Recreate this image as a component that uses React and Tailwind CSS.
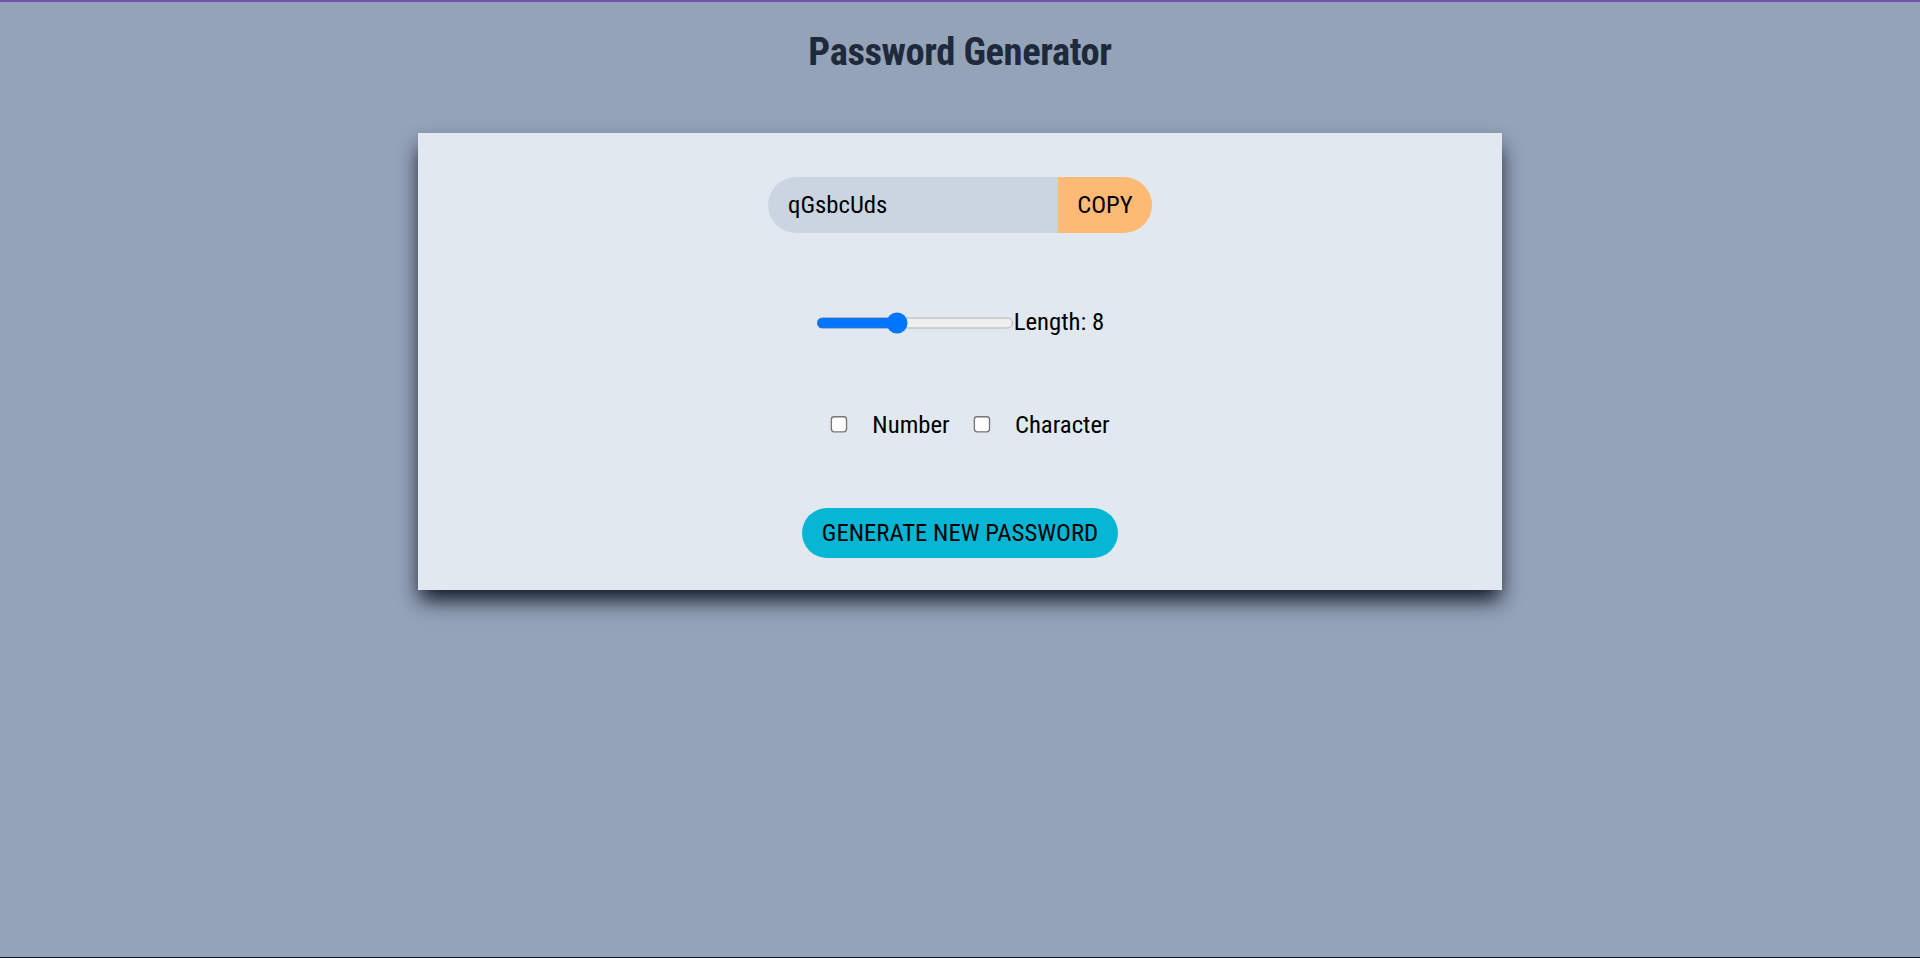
import React, { useState } from 'react';

const App = () => {
  const [length, setLength] = useState(8);
  const [numberAllowed, setNumberAllowed] = useState(false);
  const [charAllowed, setCharAllowed] = useState(false);
  const [password] = useState('qGsbcUds');

  return (
    <div className="w-full h-[958px] bg-[#94a3b8] border-t-2 border-[#7350b0] border-b border-b-[#14141f] font-['Roboto',sans-serif] [font-stretch:80%] overflow-hidden">
      {/* title */}
      <h1 className="text-center text-[38.5px] leading-none font-bold text-[#1e293b] pt-[31px] tracking-[-0.4px]">
        Password Generator
      </h1>

      {/* card */}
      <div className="w-[1084px] mx-auto mt-[61px] bg-[#e2e8f0] shadow-[0_12px_20px_-2px_rgba(10,12,30,0.95)] pt-[44px] pb-[32px] flex flex-col items-center text-black text-[24.75px]">
        <div className="flex h-[56px] w-[384px] rounded-full overflow-hidden">
          <input
            type="text"
            readOnly
            value={password}
            className="flex-1 min-w-0 bg-[#cbd5e1] px-5 outline-none text-[24.75px] [font-stretch:80%]"
          />
          <button className="w-[94px] shrink-0 bg-[#fdba74] text-center uppercase [font-stretch:80%]">copy</button>
        </div>

        <div className="mt-[77px] h-[26px] flex items-center">
          <input
            type="range"
            min={0}
            max={20}
            value={length}
            onChange={(e) => setLength(e.target.value)}
            className="w-[144px] [zoom:1.375] m-0 cursor-pointer"
          />
          <label className="leading-none">Length: {length}</label>
        </div>

        <div className="mt-[76px] h-[26px] flex items-center pl-5">
          <input
            type="checkbox"
            checked={numberAllowed}
            onChange={() => setNumberAllowed((p) => !p)}
            className="[zoom:1.375] m-0"
          />
          <label className="ml-6">Number</label>
          <input
            type="checkbox"
            checked={charAllowed}
            onChange={() => setCharAllowed((p) => !p)}
            className="[zoom:1.375] m-0 ml-[17px]"
          />
          <label className="ml-6">Character</label>
        </div>

        <button className="mt-[70px] h-[50px] px-5 rounded-full bg-[#06b6d4] uppercase [font-stretch:80%]">
          Generate new password
        </button>
      </div>
    </div>
  );
};

export default App;
